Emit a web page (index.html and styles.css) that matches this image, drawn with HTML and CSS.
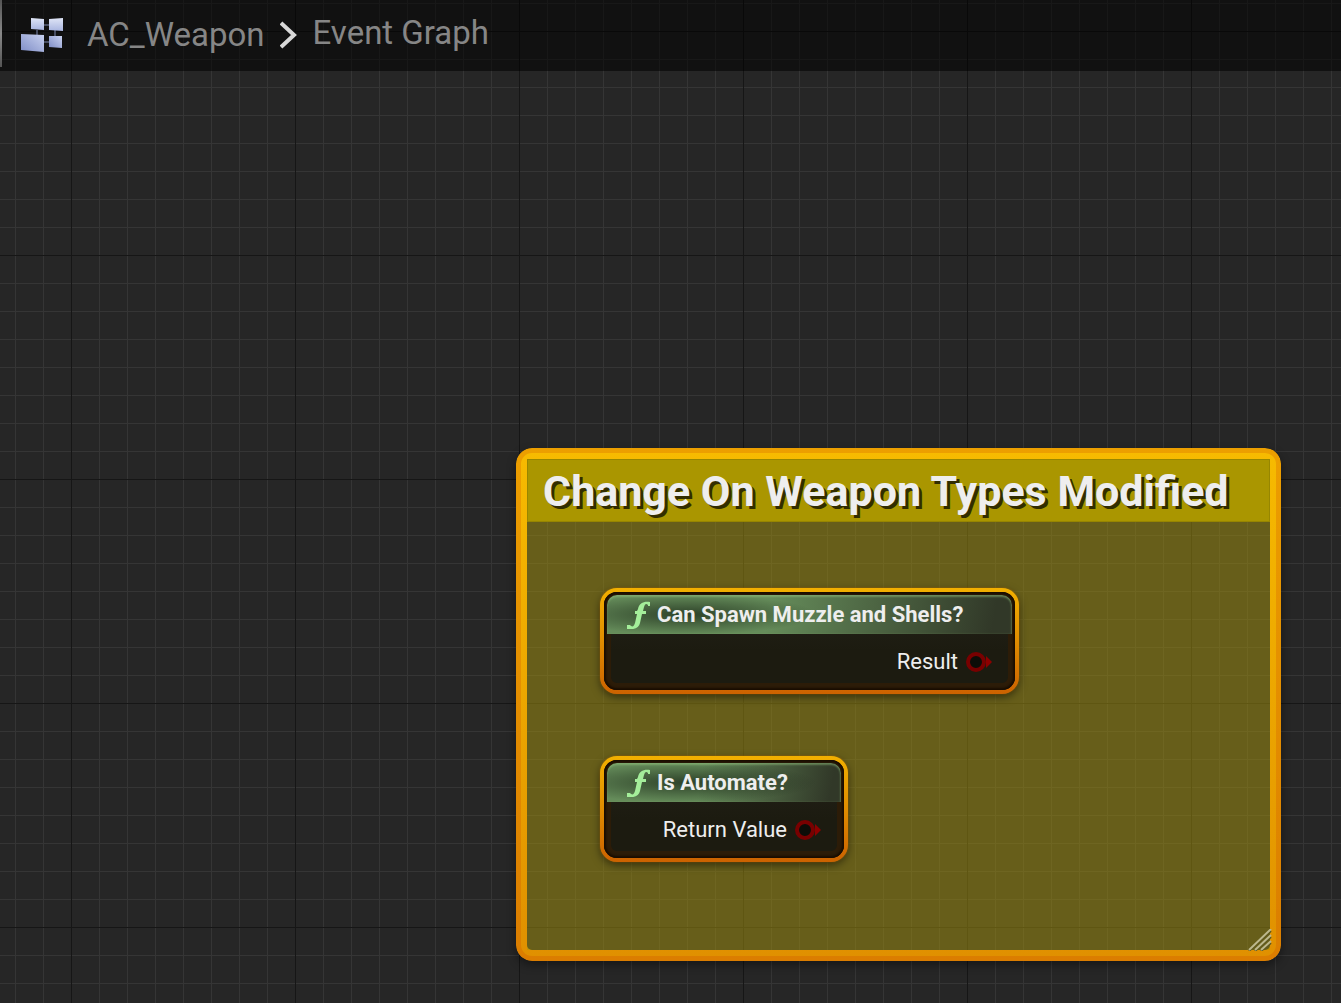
FILE: index.html
```html
<!DOCTYPE html>
<html lang="en">
<head>
    <meta charset="UTF-8">
    <meta name="viewport" content="width=device-width, initial-scale=1.0">
    <title>AC_Weapon - Event Graph</title>
    <link rel="stylesheet" href="styles.css">
</head>
<body>

    <!-- Breadcrumb bar -->
    <header class="toolbar">
        <svg class="graph-icon" viewBox="0 0 42 34" aria-hidden="true">
            <defs>
                <linearGradient id="block" x1="0" y1="0" x2="0" y2="1">
                    <stop offset="0" stop-color="#dfe5f6"/>
                    <stop offset="1" stop-color="#a9b5e0"/>
                </linearGradient>
                <linearGradient id="block-low" x1="1" y1="0" x2="0" y2="1">
                    <stop offset="0" stop-color="#c9d2f0"/>
                    <stop offset="1" stop-color="#7f8dc6"/>
                </linearGradient>
            </defs>
            <path d="M22 7h6M16 12v5M34 12v6M22 24h6" stroke="#59617c" stroke-width="1.5"/>
            <path d="M10 0l13 1v11l-13-1z" fill="url(#block)"/>
            <path d="M28 1l14-1v13l-14-1z" fill="url(#block)"/>
            <path d="M0 16l23 1v17l-23-2z" fill="url(#block-low)"/>
            <path d="M28 18l13 0v12l-13-1z" fill="url(#block-low)"/>
        </svg>
        <nav class="breadcrumb">
            <a href="#">AC_Weapon</a>
            <svg class="chevron" viewBox="0 0 18 28" aria-hidden="true">
                <path d="M1 2l13 12-13 12" fill="none" stroke="#d8d8d8" stroke-width="4"/>
            </svg>
            <a href="#" class="current">Event Graph</a>
        </nav>
    </header>

    <!-- Graph canvas -->
    <main class="canvas">
        <section class="comment">
            <h1 class="comment-title">Change On Weapon Types Modified</h1>
            <svg class="resize" viewBox="0 0 24 22" aria-hidden="true">
                <path d="M1 21L23 1M7 21L23 7M13 21L23 13" stroke="#5e581c" stroke-width="2" transform="translate(0 1)"/>
                <path d="M1 21L23 0M7 21L23 6M13 21L23 12" stroke="#bcb78c" stroke-width="2"/>
            </svg>
        </section>

        <article class="node node-spawn">
            <div class="node-inner">
                <h2 class="node-title">
                    <svg class="function-icon" viewBox="0 0 24 28" aria-hidden="true">
                        <path d="M23 5V1C17 0 12 2 11 8l-1 2H8v3h2l-2 9c-1 3-2 4-4 3l-1-1H0v4c7 1 12-1 13-6l2-9h4v-3h-3l1-4c1-3 2-4 4-2v1z" fill="#a4ee9a"/>
                    </svg>
                    Can Spawn Muzzle and Shells?
                </h2>
                <div class="output">
                    Result
                    <svg class="pin" viewBox="0 0 26 20" aria-hidden="true">
                        <path d="M20 4l6 6-6 6z" fill="#8c0000"/>
                        <circle cx="10" cy="10" r="8" fill="#0d0d08" stroke="#780000" stroke-width="4"/>
                    </svg>
                </div>
            </div>
        </article>

        <article class="node node-automate">
            <div class="node-inner">
                <h2 class="node-title">
                    <svg class="function-icon" viewBox="0 0 24 28" aria-hidden="true">
                        <path d="M23 5V1C17 0 12 2 11 8l-1 2H8v3h2l-2 9c-1 3-2 4-4 3l-1-1H0v4c7 1 12-1 13-6l2-9h4v-3h-3l1-4c1-3 2-4 4-2v1z" fill="#a4ee9a"/>
                    </svg>
                    Is Automate?
                </h2>
                <div class="output">
                    Return Value
                    <svg class="pin" viewBox="0 0 26 20" aria-hidden="true">
                        <path d="M20 4l6 6-6 6z" fill="#8c0000"/>
                        <circle cx="10" cy="10" r="8" fill="#0d0d08" stroke="#780000" stroke-width="4"/>
                    </svg>
                </div>
            </div>
        </article>
    </main>

</body>
</html>
```

FILE: styles.css
```css
* {
    box-sizing: border-box;
}
body {
    display: flex;
    flex-direction: column;
    min-height: 100vh;
    margin: 0;
    overflow: hidden;
    font-family: Roboto, sans-serif;
    background-color: #262626;
    /* major lines every 224px, minor lines every 28px */
    background-image:
        linear-gradient(90deg, #161616 1px, transparent 1px),
        linear-gradient(#161616 1px, transparent 1px),
        linear-gradient(90deg, #353535 1px, transparent 1px),
        linear-gradient(#353535 1px, transparent 1px);
    background-size: 224px 224px, 224px 224px, 28px 28px, 28px 28px;
    background-position: 71px 31px, 71px 31px, 15px 3px, 15px 3px;
}

/* Breadcrumb bar */
.toolbar {
    display: flex;
    align-items: center;
    height: 71px;
    padding: 0 0 2px 21px;
    background:
        linear-gradient(#555, #888 50%, #555) 0 0 / 2px 67px no-repeat,
        rgba(0, 0, 0, 0.55);
}
.graph-icon {
    width: 42px;
    height: 34px;
    margin-right: 24px;
}
.breadcrumb {
    display: flex;
    align-items: center;
    gap: 15px;
}
.breadcrumb a {
    font-size: 33px;
    line-height: 40px;
    color: #868686;
    text-decoration: none;
}
.breadcrumb .current {
    padding-bottom: 4px;
}
.chevron {
    width: 18px;
    height: 28px;
}

/* Graph canvas */
.canvas {
    position: relative;
    flex: 1;
}
.comment {
    position: absolute;
    left: 516px;
    top: 377px;
    width: 765px;
    height: 513px;
    padding: 11px;
    border-radius: 16px;
    box-shadow: 0 4px 10px rgba(0, 0, 0, 0.4);
}
/* the frame is a masked gradient so the grid shows through the middle */
.comment::before {
    content: "";
    position: absolute;
    inset: 0;
    border: 11px solid transparent;
    border-radius: 16px;
    outline: 5px solid rgba(200, 60, 0, 0.22);
    outline-offset: -5px;
    background: linear-gradient(#f7bb00, #e09000) border-box;
    mask: linear-gradient(#000 0 0) padding-box, linear-gradient(#000 0 0);
    mask-composite: exclude;
}
.comment::after {
    content: "";
    position: absolute;
    inset: 11px;
    background: rgba(168, 150, 14, 0.5);
}
.comment-title {
    position: relative;
    z-index: 1;
    margin: 0;
    padding: 1px 15px 0;
    border: 1px solid #978600;
    background: #aa9600;
    font-size: 43px;
    line-height: 60px;
    white-space: nowrap;
    color: #eee;
    text-shadow: 3px 3px 0 #322d00;
}
.resize {
    position: absolute;
    z-index: 1;
    right: 9px;
    bottom: 10px;
    width: 24px;
    height: 22px;
}

/* Function nodes */
.node {
    position: absolute;
    left: 600px;
    padding: 4px;
    border-radius: 17px;
    background: linear-gradient(#f2b000, #e08c00 50%, #cc6200);
    box-shadow: 0 3px 8px rgba(0, 0, 0, 0.5), 0 0 2px #c07800;
}
.node-spawn {
    top: 517px;
    width: 419px;
}
.node-automate {
    top: 685px;
    width: 248px;
}
.node-inner {
    height: 98px;
    padding: 3px;
    border-radius: 13px;
    background: linear-gradient(#24221a, #1c1b10 60%, #1c1b10);
    box-shadow: inset 0 0 2px 2px #1a0d00, inset 0 0 0 7px #2c1c08;
}
.node-title {
    display: flex;
    align-items: center;
    gap: 6px;
    height: 39px;
    margin: 0;
    padding-left: 20px;
    border-radius: 10px 10px 0 0;
    background:
        radial-gradient(ellipse 130px 20px at 80px 50%, rgba(22, 34, 20, 0.7), transparent),
        linear-gradient(100deg, #658c5a 40%, #313828 95%);
    box-shadow: inset 0 2px 2px rgba(150, 200, 130, 0.45), inset -1px 0 2px rgba(150, 200, 130, 0.25);
    font-size: 22px;
    line-height: 28px;
    white-space: nowrap;
    color: #eee;
}
.function-icon {
    width: 24px;
    height: 28px;
}
.output {
    display: flex;
    align-items: center;
    justify-content: flex-end;
    gap: 8px;
    padding: 14px 20px 0 0;
    font-size: 22px;
    line-height: 28px;
    color: #eee;
}
.pin {
    width: 26px;
    height: 20px;
}
```
